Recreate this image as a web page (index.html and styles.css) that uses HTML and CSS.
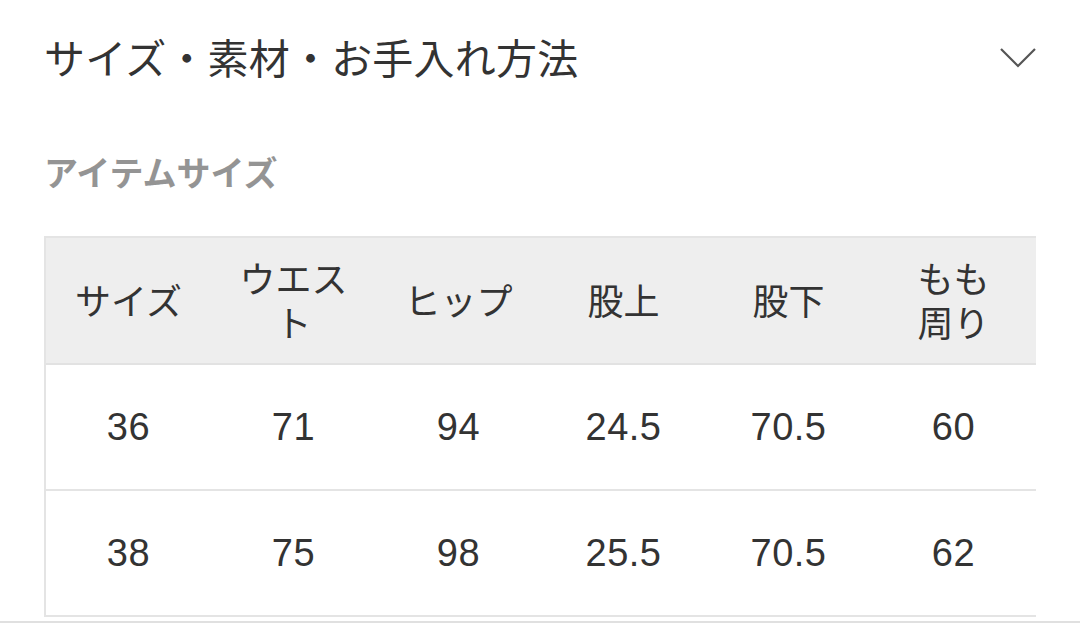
FILE: index.html
```html
<!DOCTYPE html>
<html lang="ja">
<head>
<meta charset="utf-8">
<link rel="stylesheet" href="styles.css">
</head>
<body>
<div class="wrap">
  <div class="head">
    <h2 class="title">サイズ・素材・お手入れ方法</h2>
    <svg class="chev" width="36" height="20" viewBox="0 0 36 20"><path d="M1 1 L18 18 L35 1" fill="none" stroke="#555" stroke-width="2.2"/></svg>
  </div>
  <div class="sub">アイテムサイズ</div>
  <div class="table-clip">
    <div class="grid">
      <div class="th">サイズ</div>
      <div class="th"><span class="ln">ウエス</span><span class="ln">ト</span></div>
      <div class="th">ヒップ</div>
      <div class="th">股上</div>
      <div class="th">股下</div>
      <div class="th"><span class="ln">もも</span><span class="ln">周り</span></div>
      <div class="td">36</div>
      <div class="td">71</div>
      <div class="td">94</div>
      <div class="td">24.5</div>
      <div class="td">70.5</div>
      <div class="td">60</div>
      <div class="td">38</div>
      <div class="td">75</div>
      <div class="td">98</div>
      <div class="td">25.5</div>
      <div class="td">70.5</div>
      <div class="td">62</div>
    </div>
  </div>
</div>
<div class="bottom-line"></div>
</body>
</html>
```

FILE: styles.css
```css
* { box-sizing: border-box; }
html, body { margin: 0; padding: 0; background: #fff; }
body {
  font-family: "Liberation Sans", "Noto Sans CJK JP", sans-serif;
  color: #333;
  overflow: hidden;
  height: 624px;
}
.wrap { padding: 0 44px 0 44px; }
.head {
  height: 120px;
  display: flex;
  align-items: center;
  justify-content: space-between;
}
.title {
  margin: 0 0 8px 0;
  font-family: "Noto Sans CJK JP", sans-serif;
  font-weight: 400;
  font-size: 41px;
  line-height: 48px;
  color: #333;
  letter-spacing: 0.2px;
}
.chev { margin-top: -4px; }
.sub {
  margin-top: 32px;
  font-family: "Noto Sans CJK JP", sans-serif;
  font-weight: 700;
  font-size: 34px;
  line-height: 40px;
  color: #949494;
}
.table-clip {
  margin-top: 44px;
  width: 992px;
  overflow: hidden;
}
.grid {
  display: grid;
  grid-template-columns: repeat(6, 165px);
  border-left: 2px solid #e4e4e4;
}
.th {
  height: 129px;
  padding-bottom: 4px;
  background: #eeeeee;
  border-top: 2px solid #e4e4e4;
  border-bottom: 2px solid #e2e2e2;
  display: flex;
  flex-direction: column;
  align-items: center;
  justify-content: center;
  text-align: center;
  font-family: "Noto Sans CJK JP", sans-serif;
  font-size: 36px;
  line-height: 44px;
  color: #333;
}
.ln { display: block; line-height: 44px; }
.td {
  height: 126px;
  border-bottom: 2px solid #e4e4e4;
  display: flex;
  align-items: center;
  justify-content: center;
  font-size: 38px;
  color: #333;
  letter-spacing: 0.5px;
}
.bottom-line {
  margin-top: 4px;
  height: 2px;
  background: #e0e0e0;
}
```
